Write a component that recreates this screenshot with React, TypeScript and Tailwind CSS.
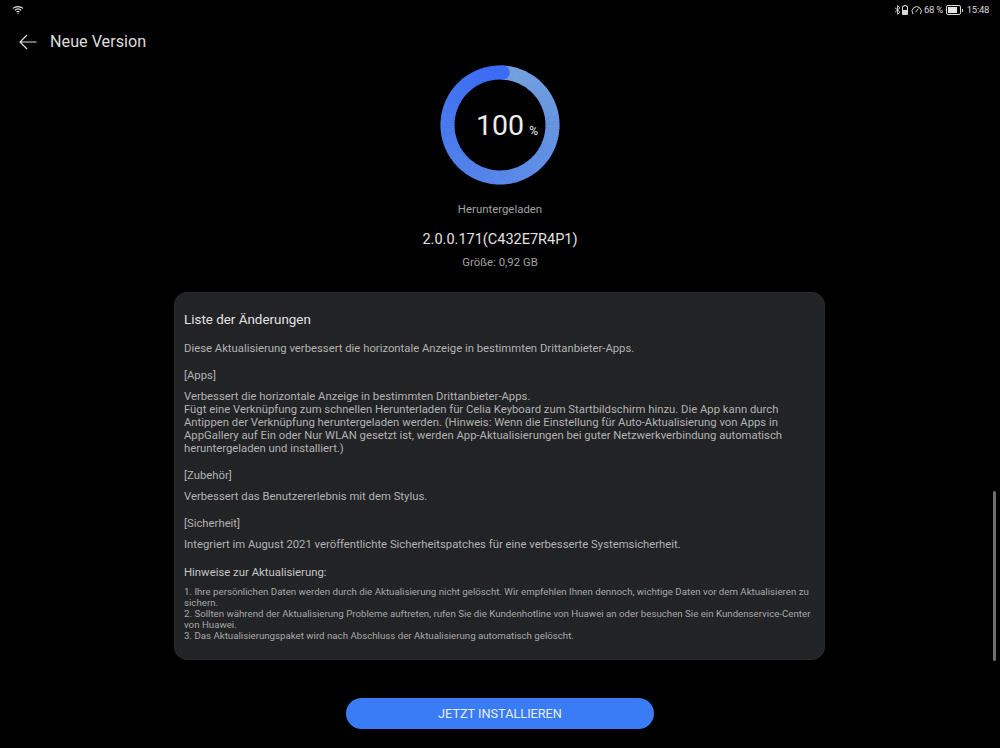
const FONT = "font-['Roboto','Noto_Sans',sans-serif]";

/* ring drawn as short arc pieces so the colour can sweep round it */
function mix(a: number[], b: number[], t: number) {
  return `rgb(${a.map((v, i) => Math.round(v + (b[i] - v) * t)).join(",")})`;
}

function Ring() {
  const r = 52.5;
  const cx = 60;
  const cy = 60;
  const n = 180;
  const start = [118, 163, 222];
  const end = [58, 108, 246];
  const pt = (deg: number) => {
    const a = ((deg - 90) * Math.PI) / 180;
    return `${cx + r * Math.cos(a)} ${cy + r * Math.sin(a)}`;
  };
  const pieces = [];
  for (let i = 0; i < n; i++) {
    const a0 = (i / n) * 360 + 3;
    const a1 = ((i + 1.3) / n) * 360 + 3;
    pieces.push(
      <path
        key={i}
        d={`M ${pt(a0)} A ${r} ${r} 0 0 1 ${pt(a1)}`}
        fill="none"
        stroke={mix(start, end, i / n)}
        strokeWidth="14"
      />,
    );
  }
  return (
    <svg width="120" height="120" viewBox="0 0 120 120">
      {pieces}
      <circle cx={cx + r * Math.sin((3 * Math.PI) / 180)} cy={cy - r * Math.cos((3 * Math.PI) / 180)} r="7" fill="#3a6cf6" />
    </svg>
  );
}

function StatusBar() {
  return (
    <div className="flex h-[20px] items-center justify-between pl-[12px] pr-[11px] text-[#d8d8d8]">
      <svg width="12" height="10" viewBox="0 0 12 10" fill="none" stroke="#e4e4e4" strokeWidth="1.2">
        <path d="M1 3.4C3.8 .9 8.2 .9 11 3.4" />
        <path d="M2.8 5.2c1.9-1.6 4.5-1.6 6.4 0" />
        <path d="M4.6 7c.9-.7 1.9-.7 2.8 0" />
        <circle cx="6" cy="8.6" r=".6" fill="#e4e4e4" stroke="none" />
      </svg>
      <div className="flex items-center text-[9.5px] leading-none tracking-[-0.3px]">
        <svg width="7" height="10" viewBox="0 0 7 10" fill="none" stroke="#d8d8d8" strokeWidth="0.9">
          <path d="M1 2.8l5 4.4L3.5 9.4V.6L6 2.8 1 7.2" />
        </svg>
        <svg className="ml-[1px]" width="6" height="10" viewBox="0 0 6 10" fill="none" stroke="#d8d8d8" strokeWidth="1">
          <path d="M1.8 .5h2.4v1h1.3v8H.5v-8h1.3z" />
          <path d="M1 5h4v4H1z" fill="#d8d8d8" stroke="none" />
        </svg>
        <svg className="ml-[3px]" width="11" height="10" viewBox="0 0 11 10" fill="none" stroke="#d8d8d8" strokeWidth="1">
          <path d="M2 9A4.6 4.6 0 1 1 9.4 9" />
          <path d="M4.6 7.2L7.4 3.6" />
        </svg>
        <span className="ml-[2px]">68 %</span>
        <div className="ml-[3px] h-[10px] w-[15px] rounded-[2px] border border-[#d8d8d8] p-[1px]">
          <div className="h-full w-[9px] bg-[#e4e4e4]" />
        </div>
        <div className="ml-[1px] h-[3px] w-[1px] bg-[#d8d8d8]" />
        <span className="ml-[4px]">15:48</span>
      </div>
    </div>
  );
}

function Section({ title, children }: { title: string; children: React.ReactNode }) {
  return (
    <div>
      <p className="leading-[14px]">{title}</p>
      <div className="mt-[7px] leading-[13px]">{children}</div>
    </div>
  );
}

export default function App() {
  return (
    <div className={`relative h-[748px] w-[1000px] overflow-hidden bg-black ${FONT}`}>
      <StatusBar />

      <div className="mt-[10px] flex h-[24px] items-center pl-[19px]">
        <svg width="18" height="16" viewBox="0 0 18 16" fill="none" stroke="#e0e0e0" strokeWidth="1.2">
          <path d="M17.5 8H1M8 1L1 8l7 7" />
        </svg>
        <span className="ml-[13px] text-[16.2px] text-[#dcdcdc]">Neue Version</span>
      </div>

      <div className="flex flex-col items-center">
        <div className="relative mt-[11px] h-[120px] w-[120px]">
          <Ring />
          <div className="absolute inset-0 flex items-center justify-center pl-[14px] pt-[2px] text-[#ececec]">
            <span className="text-[28.5px] leading-none">100</span>
            <span className="ml-[5px] mt-[9px] text-[12px] leading-none">%</span>
          </div>
        </div>
        <p className="mt-[17px] text-[11.4px] leading-[14px] text-[#a2a2a2]">Heruntergeladen</p>
        <p className="mt-[15px] text-[14.5px] leading-[18px] text-[#e2e2e2]">2.0.0.171(C432E7R4P1)</p>
        <p className="mt-[6px] text-[11.4px] leading-[14px] text-[#a2a2a2]">Größe: 0,92 GB</p>
      </div>

      <div className="ml-[174px] mt-[23px] h-[368px] w-[651px] rounded-[13px] border border-[#2a2b2d] bg-[#222325] pl-[9px] pr-[10px] pt-[19px] text-[11.3px] text-[#b2b2b2]">
        <p className="text-[13.4px] leading-[16px] text-[#e2e2e2]">Liste der Änderungen</p>
        <p className="mt-[14px] leading-[14px]">
          Diese Aktualisierung verbessert die horizontale Anzeige in bestimmten Drittanbieter-Apps.
        </p>
        <div className="mt-[13px] flex flex-col gap-[14px]">
          <Section title="[Apps]">
            Verbessert die horizontale Anzeige in bestimmten Drittanbieter-Apps.
            <br />
            Fügt eine Verknüpfung zum schnellen Herunterladen für Celia Keyboard zum Startbildschirm hinzu. Die App kann durch
            <br />
            Antippen der Verknüpfung heruntergeladen werden. (Hinweis: Wenn die Einstellung für Auto-Aktualisierung von Apps in
            <br />
            AppGallery auf Ein oder Nur WLAN gesetzt ist, werden App-Aktualisierungen bei guter Netzwerkverbindung automatisch
            <br />
            heruntergeladen und installiert.)
          </Section>
          <Section title="[Zubehör]">Verbessert das Benutzererlebnis mit dem Stylus.</Section>
          <Section title="[Sicherheit]">
            Integriert im August 2021 veröffentlichte Sicherheitspatches für eine verbesserte Systemsicherheit.
          </Section>
        </div>
        <p className="mt-[14px] text-[11.35px] leading-[14px] text-[#c4c4c4]">Hinweise zur Aktualisierung:</p>
        <div className="mt-[7px] text-[9.7px] leading-[11px] text-[#a8a8a8]">
          1. Ihre persönlichen Daten werden durch die Aktualisierung nicht gelöscht. Wir empfehlen Ihnen dennoch, wichtige Daten vor dem Aktualisieren zu
          <br />
          sichern.
          <br />
          2. Sollten während der Aktualisierung Probleme auftreten, rufen Sie die Kundenhotline von Huawei an oder besuchen Sie ein Kundenservice-Center
          <br />
          von Huawei.
          <br />
          3. Das Aktualisierungspaket wird nach Abschluss der Aktualisierung automatisch gelöscht.
        </div>
      </div>

      <div className="mt-[38px] flex justify-center">
        <button className="h-[31px] w-[308px] rounded-full bg-[#3a7bf6] text-[12.7px] text-[#e6eefc]">JETZT INSTALLIEREN</button>
      </div>

      {/* overlay scrollbar */}
      <div className="absolute left-[993px] top-[491px] h-[170px] w-[3px] rounded-full bg-[#6e6e6e]" />
    </div>
  );
}
